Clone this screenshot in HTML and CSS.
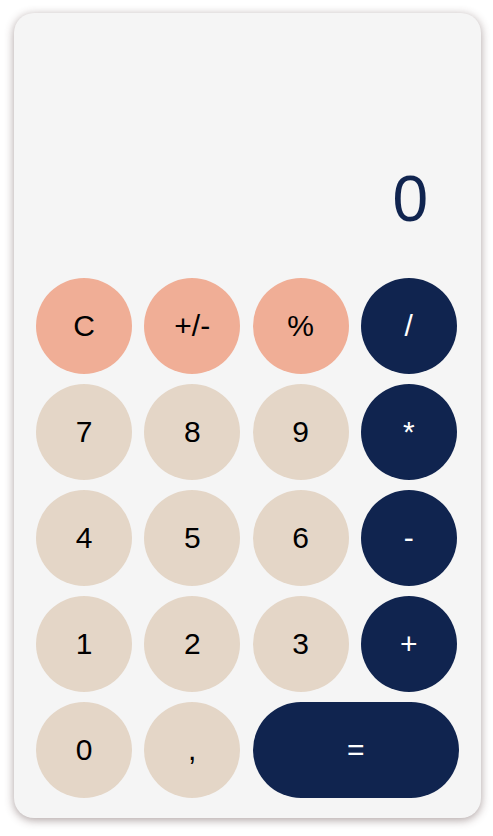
FILE: index.html
```html
<!DOCTYPE html>
<html lang="en">
<head>
<meta charset="utf-8">
<title>Calculator</title>
<link rel="stylesheet" href="styles.css">
</head>
<body>
<div class="page">
  <div class="calc">
    <div class="display">0</div>
    <div class="keys">
      <button class="key fn">C</button>
      <button class="key fn">+/-</button>
      <button class="key fn">%</button>
      <button class="key op">/</button>
      <button class="key num">7</button>
      <button class="key num">8</button>
      <button class="key num">9</button>
      <button class="key op">*</button>
      <button class="key num">4</button>
      <button class="key num">5</button>
      <button class="key num">6</button>
      <button class="key op">-</button>
      <button class="key num">1</button>
      <button class="key num">2</button>
      <button class="key num">3</button>
      <button class="key op">+</button>
      <button class="key num">0</button>
      <button class="key num">,</button>
      <button class="key op wide">=</button>
    </div>
  </div>
</div>
</body>
</html>
```

FILE: styles.css
```css
html, body {
  margin: 0;
  padding: 0;
  background: #ffffff;
  font-family: "Liberation Sans", Arial, sans-serif;
}

.page {
  padding: 13px 12px 18px 14px;
}

.calc {
  width: 467px;
  height: 805px;
  box-sizing: border-box;
  background: #f5f5f5;
  border-radius: 20px;
  box-shadow: 0 2px 10px rgba(70, 45, 45, 0.45);
  display: flex;
  flex-direction: column;
  padding: 0 22px 20px 22px;
}

.display {
  flex: 1;
  display: flex;
  align-items: flex-end;
  justify-content: flex-end;
  font-size: 64px;
  line-height: 74px;
  color: #10244f;
  padding: 0 31px 42px 0;
}

.keys {
  display: grid;
  grid-template-columns: repeat(4, 1fr);
  grid-auto-rows: 96px;
  gap: 10px;
}

.key {
  width: 96px;
  height: 96px;
  border: none;
  border-radius: 48px;
  padding: 0;
  margin: 0;
  font-family: "Liberation Sans", Arial, sans-serif;
  font-size: 30px;
  color: #000000;
  display: flex;
  align-items: center;
  justify-content: center;
}

.fn {
  background: #f0ae96;
}

.num {
  background: #e4d6c7;
}

.op {
  background: #10244f;
  color: #ffffff;
}

.wide {
  grid-column: span 2;
  width: 100%;
}
```
